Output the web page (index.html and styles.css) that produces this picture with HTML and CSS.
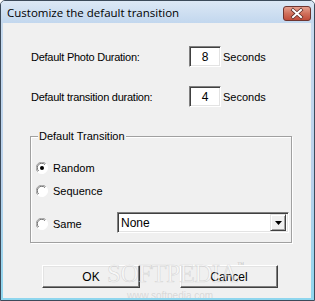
FILE: index.html
```html
<!DOCTYPE html>
<html>
<head>
<meta charset="utf-8">
<title>Customize the default transition</title>
<link rel="stylesheet" href="styles.css">
</head>
<body>
<div class="window">
  <div class="titlebar">
    <span class="title">Customize the default transition</span>
    <span class="close">
      <svg width="28" height="15" viewBox="0 0 28 15">
        <defs>
          <linearGradient id="cg" x1="0" y1="0" x2="0" y2="1">
            <stop offset="0" stop-color="#e8a493"/>
            <stop offset="0.5" stop-color="#d0705c"/>
            <stop offset="1" stop-color="#c04a38"/>
          </linearGradient>
        </defs>
        <rect x="0.5" y="0.5" width="27" height="14" rx="2.5" fill="url(#cg)" stroke="#6e3530"/>
        <path d="M10 4 L18 11 M18 4 L10 11" stroke="#5a2a26" stroke-width="3.4" stroke-linecap="square"/>
        <path d="M10 4 L18 11 M18 4 L10 11" stroke="#ffffff" stroke-width="2" stroke-linecap="square"/>
      </svg>
    </span>
  </div>
  <div class="client">
    <div class="row row-first">
      <span class="label">Default Photo Duration:</span>
      <span class="num">8</span>
      <span class="unit">Seconds</span>
    </div>
    <div class="row row-second">
      <span class="label">Default transition duration:</span>
      <span class="num">4</span>
      <span class="unit">Seconds</span>
    </div>
    <div class="group">
      <span class="legend">Default Transition</span>
      <div class="opt opt-random">
        <svg class="radio" width="12" height="12" viewBox="0 0 12 12">
          <circle cx="6" cy="6" r="5.5" fill="#ffffff"/>
          <path d="M1.8 9.9 A5.5 5.5 0 0 1 9.9 1.8" fill="none" stroke="#a0a0a0"/>
          <path d="M9.9 1.8 A5.5 5.5 0 0 1 1.8 9.9" fill="none" stroke="#ffffff"/>
          <path d="M2.6 9 A4.4 4.4 0 0 1 9 2.6" fill="none" stroke="#6d6d6d"/>
          <circle cx="6" cy="6" r="2" fill="#000"/>
        </svg>
        <span>Random</span>
      </div>
      <div class="opt opt-seq">
        <svg class="radio" width="12" height="12" viewBox="0 0 12 12">
          <circle cx="6" cy="6" r="5.5" fill="#ffffff"/>
          <path d="M1.8 9.9 A5.5 5.5 0 0 1 9.9 1.8" fill="none" stroke="#a0a0a0"/>
          <path d="M9.9 1.8 A5.5 5.5 0 0 1 1.8 9.9" fill="none" stroke="#ffffff"/>
          <path d="M2.6 9 A4.4 4.4 0 0 1 9 2.6" fill="none" stroke="#6d6d6d"/>
        </svg>
        <span>Sequence</span>
      </div>
      <div class="opt opt-same">
        <svg class="radio radio-same" width="12" height="12" viewBox="0 0 12 12">
          <circle cx="6" cy="6" r="5.5" fill="#ffffff"/>
          <path d="M1.8 9.9 A5.5 5.5 0 0 1 9.9 1.8" fill="none" stroke="#a0a0a0"/>
          <path d="M9.9 1.8 A5.5 5.5 0 0 1 1.8 9.9" fill="none" stroke="#ffffff"/>
          <path d="M2.6 9 A4.4 4.4 0 0 1 9 2.6" fill="none" stroke="#6d6d6d"/>
        </svg>
        <span class="same-label">Same</span>
        <div class="combo">
          <span class="combo-text">None</span>
          <span class="combo-btn">
            <svg width="7" height="4" viewBox="0 0 7 4"><path d="M0 0 H7 L3.5 4 Z" fill="#000"/></svg>
          </span>
        </div>
      </div>
    </div>
    <div class="buttons">
      <button class="btn btn-ok">OK</button>
      <button class="btn btn-cancel">Cancel</button>
    </div>
    <div class="watermark">SOFTPEDIA<span class="tm">™</span></div>
    <div class="watermark-url">www.softpedia.com</div>
  </div>
</div>
</body>
</html>
```
FILE: styles.css
```css
html, body {
  margin: 0;
  padding: 0;
  background: #ffffff;
}
.window {
  width: 315px;
  height: 301px;
  box-sizing: border-box;
  border: 1px solid #3c4a5a;
  border-radius: 5px 5px 0 0;
  background: linear-gradient(#c9dcf0, #b8d0ea 60%, #8ed6ee);
  display: flex;
  flex-direction: column;
  font-family: "Liberation Sans", Arial, sans-serif;
  font-size: 11px;
  color: #000;
  overflow: hidden;
}
.titlebar {
  height: 22px;
  flex: none;
  display: flex;
  align-items: center;
  justify-content: space-between;
  padding: 0 3px 0 6px;
  background: linear-gradient(#dce8f5, #c2d7ee);
}
.title {
  font-family: "Open Sans", "Noto Sans", sans-serif;
  font-size: 11.5px;
  color: #000;
  margin-top: 1px;
}
.close {
  display: flex;
  margin-top: 2px;
}
.client {
  flex: 1;
  margin: 0 3px 2px 2px;
  background: #f0f0f0;
  position: relative;
  display: flex;
  flex-direction: column;
  padding-left: 28px;
  overflow: hidden;
}
.row {
  display: flex;
  align-items: center;
  height: 21px;
}
.row-first { margin-top: 23px; }
.row-second { margin-top: 19px; }
.label {
  width: 158px;
  letter-spacing: -0.25px;
}
.num {
  width: 32px;
  height: 21px;
  box-sizing: border-box;
  background: #fff;
  border-style: solid;
  border-width: 1px;
  border-color: #808080 #ffffff #ffffff #808080;
  box-shadow: inset 1px 1px 0 #404040, inset -1px -1px 0 #e3e3e3;
  display: flex;
  align-items: center;
  justify-content: center;
  font-size: 12px;
}
.unit {
  margin-left: 2px;
}
.group {
  position: relative;
  margin-top: 29px;
  margin-left: -1px;
  width: 262px;
  height: 107px;
  box-sizing: border-box;
  border: 1px solid #a0a0a0;
  box-shadow: inset 1px 1px 0 #ffffff, 1px 1px 0 #ffffff;
  padding: 24px 0 0 5px;
  display: flex;
  flex-direction: column;
}
.legend {
  position: absolute;
  top: -7px;
  left: 7px;
  padding: 0 1px;
  background: #f0f0f0;
  line-height: 13px;
}
.opt {
  display: flex;
  align-items: center;
  height: 14px;
}
.opt-seq { margin-top: 9px; }
.opt-same {
  margin-top: 14px;
  height: 21px;
}
.radio {
  margin-right: 5px;
  flex: none;
}
.radio-same { margin-top: 2px; }
.same-label {
  width: 64px;
  margin-top: 2px;
}
.combo {
  width: 172px;
  height: 21px;
  box-sizing: border-box;
  background: #fff;
  border-style: solid;
  border-width: 1px;
  border-color: #808080 #ffffff #ffffff #808080;
  box-shadow: inset 1px 1px 0 #404040, inset -1px -1px 0 #e3e3e3;
  display: flex;
  align-items: center;
  justify-content: space-between;
  padding: 2px;
  font-size: 12px;
}
.combo-text {
  padding-left: 1px;
}
.combo-btn {
  width: 16px;
  height: 17px;
  box-sizing: border-box;
  background: #f0f0f0;
  border-style: solid;
  border-width: 1px;
  border-color: #e3e3e3 #404040 #404040 #e3e3e3;
  box-shadow: inset 1px 1px 0 #ffffff, inset -1px -1px 0 #a0a0a0;
  display: flex;
  align-items: center;
  justify-content: center;
}
.buttons {
  display: flex;
  margin-top: 22px;
  margin-left: 11px;
  gap: 40px;
}
.btn {
  width: 98px;
  height: 23px;
  box-sizing: border-box;
  margin: 0;
  padding: 0;
  font-family: "Liberation Sans", Arial, sans-serif;
  font-size: 12px;
  color: #000;
  background: #f0f0f0;
  border-style: solid;
  border-width: 1px;
  border-color: #ffffff #404040 #404040 #ffffff;
  box-shadow: inset -1px -1px 0 #808080, inset 1px 1px 0 #e3e3e3;
}
.watermark {
  position: absolute;
  left: 104px;
  top: 236px;
  font-family: "Liberation Serif", serif;
  font-size: 25px;
  line-height: 30px;
  letter-spacing: -0.5px;
  color: rgba(255, 255, 255, 0.5);
  -webkit-text-stroke: 0.7px rgba(150, 150, 150, 0.3);
  pointer-events: none;
  white-space: nowrap;
}
.tm {
  font-size: 7px;
  vertical-align: top;
  line-height: 12px;
  -webkit-text-stroke: 0;
  color: rgba(160, 160, 160, 0.6);
}
.watermark-url {
  position: absolute;
  left: 124px;
  top: 268px;
  font-family: "Liberation Sans", sans-serif;
  font-size: 10px;
  line-height: 10px;
  color: rgba(170, 170, 170, 0.35);
  pointer-events: none;
  white-space: nowrap;
}
```
